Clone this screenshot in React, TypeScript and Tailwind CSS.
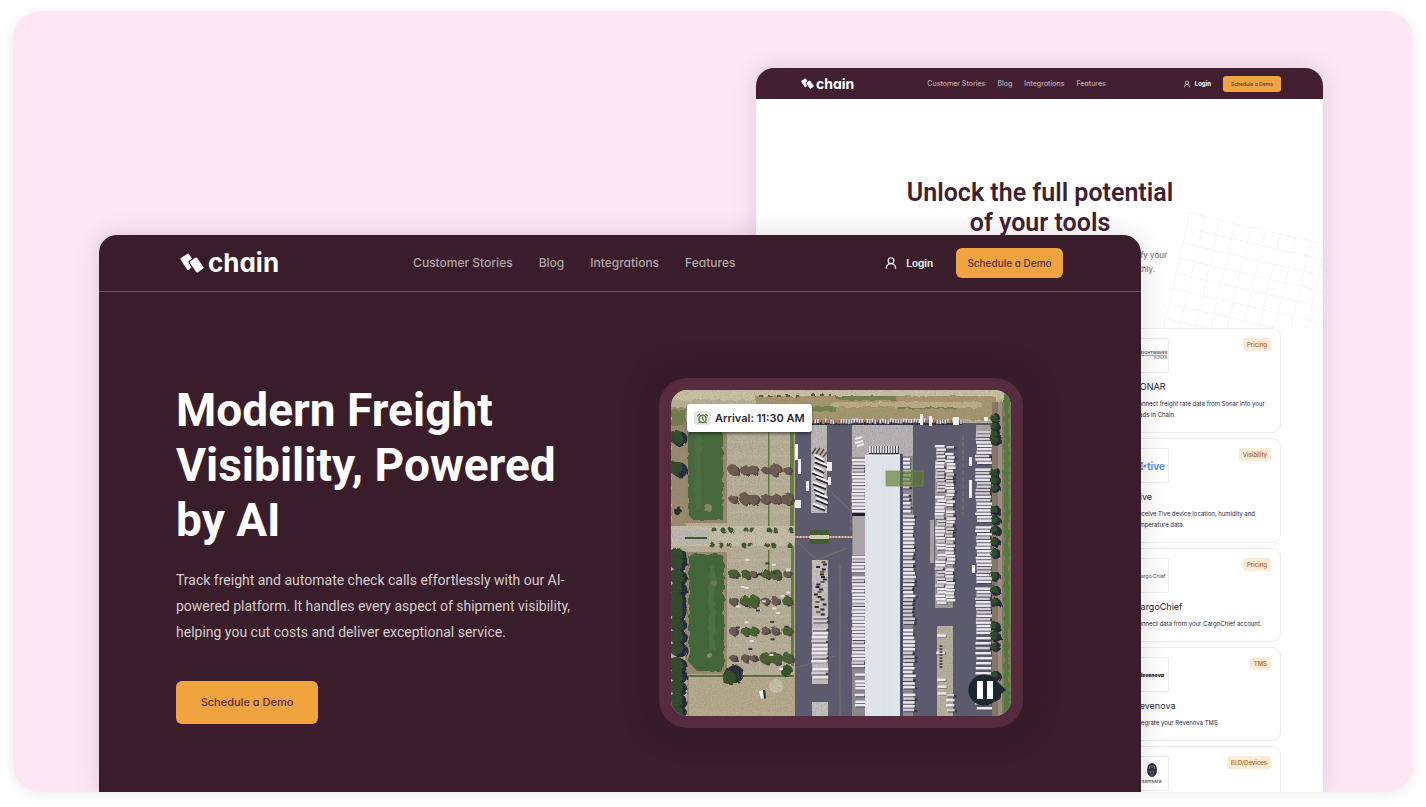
import React from 'react';
import { AlarmClock, UserRound } from 'lucide-react';

const NAV = ['Customer Stories', 'Blog', 'Integrations', 'Features'];

const INTEGRATIONS = [
  {
    name: 'SONAR',
    tag: 'Pricing',
    text: 'Connect freight rate data from Sonar into your loads in Chain.',
    logo: 'sonar',
  },
  {
    name: 'Tive',
    tag: 'Visibility',
    text: 'Receive Tive device location, humidity and temperature data.',
    logo: 'tive',
  },
  {
    name: 'CargoChief',
    tag: 'Pricing',
    text: 'Connect data from your CargoChief account.',
    logo: 'cargo',
  },
  {
    name: 'Revenova',
    tag: 'TMS',
    text: 'Integrate your Revenova TMS',
    logo: 'revenova',
  },
];

// repeatable noise, so the yard looks the same on every render
const noise = (n: number) => {
  const v = Math.sin(n * 127.1 + 11.7) * 43758.5453;
  return v - Math.floor(v);
};

// the text colour is the gap between the two links
const ChainMark = ({ className }: { className: string }) => (
  <svg viewBox="0 0 24 20" className={className} strokeLinejoin="round" aria-hidden="true">
    <path d="M2 6 8 2.2 13 10 8.200 15.500Z" fill="#fff" stroke="#fff" strokeWidth="3" />
    <path
      d="M11.400 9.300 16.200 6.100 22 14.600 17.200 18Z"
      fill="currentColor"
      stroke="currentColor"
      strokeWidth="5.500"
    />
    <path d="M11.400 9.300 16.200 6.100 22 14.600 17.200 18Z" fill="#fff" stroke="#fff" strokeWidth="3" />
  </svg>
);

type Trailers = {
  x: number;
  w: number;
  from: number;
  to: number;
  seed: number;
  jitter?: number;
  step?: number;
  fill?: number;
};

const TrailerColumn = ({
  x,
  w,
  from,
  to,
  seed,
  jitter = 2,
  step = 3.4,
  fill = 0.92,
}: Trailers) => {
  const count = Math.floor((to - from) / step);
  return (
    <g>
      {Array.from({ length: count }, (_, i) => {
        const r = noise(seed + i);
        if (r > fill) return null;
        const left = x + (noise(seed + i * 3) - 0.5) * jitter;
        const y = from + i * step;
        return (
          <g key={i}>
            <rect
              x={left + 1}
              y={y + 1}
              width={w}
              height={2.4}
              fill="#2f2d3d"
              opacity={r > 0.5 ? 0.85 : 0.35}
            />
            <rect
              x={left}
              y={y}
              width={w - r * 2}
              height={2.5}
              fill={r > 0.6 ? '#cfcbcf' : '#eae8ed'}
            />
          </g>
        );
      })}
    </g>
  );
};

const TREE_ROWS = [80, 109, 184, 211, 241, 268];
const TREE_COLS = [62, 74, 82, 94, 104, 116];

const YardPhoto = () => (
  <svg
    viewBox="0 0 340 326"
    preserveAspectRatio="xMidYMid slice"
    className="block h-auto w-full"
    role="img"
    aria-label="Aerial view of a freight yard"
  >
    <defs>
      <filter id="grain" x="0" y="0" width="100%" height="100%">
        <feTurbulence type="fractalNoise" baseFrequency="0.7" numOctaves="2" seed="4" />
        <feColorMatrix values="0 0 0 0 0.15  0 0 0 0 0.14  0 0 0 0 0.12  1.4 0 0 0 -0.55" />
      </filter>
      <filter id="rough" x="-10%" y="-10%" width="120%" height="120%">
        <feTurbulence type="fractalNoise" baseFrequency="0.15" numOctaves="2" seed="8" />
        <feDisplacementMap in="SourceGraphic" scale="5" />
      </filter>
    </defs>

    <rect width="340" height="326" fill="#b9b197" />

    {/* dirt strip and road along the top */}
    <g filter="url(#rough)">
      <rect x="-5" y="-5" width="350" height="15" fill="#c9c2a2" />
      <rect x="85" y="6" width="240" height="24" fill="#a6976f" />
      <path d="M165 6h60v4h-60zM225 16h60v3h-60zM100 17h65v4h-65z" fill="#75834f" />
      <path d="M160 12h150v5H160z" fill="#c0ad89" />
      <path d="M88 6h40M140 5h20" stroke="#5d5b4a" strokeWidth="2" strokeDasharray="4 5" />
      <rect x="0" y="18" width="15" height="125" fill="#9b8b6f" />
      <rect x="0" y="20" width="14" height="16" fill="#6f7f4a" />
    </g>

    {/* playing fields */}
    <rect x="14" y="32" width="42" height="101" fill="#9b8870" />
    <rect x="14" y="162" width="42" height="122" fill="#9b8870" />
    <g filter="url(#rough)">
      <path d="M17 34h35v96H22l-5-6Z" fill="#46693b" />
      <path d="m18 167 4-3h28l3 4v108l-5 5H26l-8-9Z" fill="#3f6637" />
      <path d="M24 40h6v80h-6zM38 175h6v85h-6z" fill="#4c7041" />
      <circle cx="37" cy="118" r="4" fill="#8b8a60" />
      <circle cx="38" cy="265" r="3" fill="#8b8a60" />
      <circle cx="43" cy="193" r="3" fill="#687b4a" />
    </g>

    {/* car park */}
    <rect x="56" y="34" width="67" height="252" fill="#b8b098" />
    {[52, 66, 94, 122, 170, 197, 226, 255].map((y) => (
      <path key={y} d={`M58 ${y}h62`} stroke="#c3bca6" strokeWidth="1" strokeDasharray="2 1" />
    ))}
    <rect x="97" y="34" width="1.5" height="104" fill="#5f7a42" />
    <rect x="97" y="160" width="1.5" height="24" fill="#5f7a42" />
    <rect x="119" y="34" width="4" height="104" fill="#648046" />
    <rect x="120" y="154" width="3" height="122" fill="#648046" />
    <rect x="0" y="136" width="124" height="20" fill="#c6bfa8" />
    <path d="M0 140h38v14H0z" fill="#bdb9b3" />
    <path d="M14 148h22" stroke="#41552f" strokeWidth="2" />
    <path d="M17 286h106" stroke="#587040" strokeWidth="2" />
    <rect x="17" y="288" width="107" height="38" fill="#b6ab8e" />
    <path d="M17 287v39" stroke="#8c8069" />
    <circle cx="105" cy="296" r="7" fill="#c9c0a8" />

    <g filter="url(#rough)">
      {TREE_ROWS.map((y, r) =>
        TREE_COLS.map((x, c) => {
          const n = noise(r * 9 + c);
          return (
            <g key={`${r}-${c}`}>
              <circle cx={x + 2} cy={y + 1} r={3 + n * 3} fill="#4b4243" />
              <circle
                cx={x}
                cy={y}
                r={3 + n * 3}
                fill={r > 1 && n > 0.4 ? '#49602f' : '#6d5a4f'}
              />
            </g>
          );
        })
      )}
      {[43, 52, 60, 75, 81, 98, 104, 120].map((x) => (
        <g key={x}>
          <circle cx={x} cy="140" r="2.5" fill="#475736" />
          <circle cx={x - 2} cy="155" r="2.5" fill="#475736" />
        </g>
      ))}
      {[47, 78, 165, 172, 186, 198, 210, 221, 234, 246, 258, 274, 284, 297, 310, 322].map((y) => (
        <g key={y}>
          <circle cx="9" cy={y + 2} r="7.5" fill="#23283a" />
          <circle cx="5" cy={y} r="7" fill="#2d4a2a" />
        </g>
      ))}
      <circle cx="7" cy="121" r="4" fill="#263323" />
      <circle cx="64" cy="284" r="9" fill="#262f35" />
      <circle cx="58" cy="288" r="7" fill="#324f28" />
      <circle cx="116" cy="281" r="6" fill="#324f28" />
    </g>
    {Array.from({ length: 26 }, (_, i) => (
      <rect
        key={i}
        x={60 + noise(i) * 56}
        y={165 + noise(i + 50) * 118}
        width="4"
        height="2"
        fill={i % 3 === 0 ? '#34363f' : '#eceaea'}
      />
    ))}
    <path d="m88 301 4-1 1 8-3 1Z" fill="#fff" />
    <path d="m92 300 2 0 1 8-2 1Z" fill="#23232f" />

    {/* asphalt */}
    <rect x="124" y="33" width="198" height="293" fill="#5c5a6e" />
    <rect x="140" y="35" width="16" height="88" fill="#bcb9b8" />
    <rect x="141" y="170" width="16" height="124" fill="#c4c0bd" />
    <rect x="141" y="312" width="16" height="14" fill="#c4c0bd" />
    <rect x="181" y="35" width="61" height="32" fill="#b7b3b4" />
    <rect x="231" y="66" width="11" height="260" fill="#8e8b94" />
    <rect x="181" y="67" width="13" height="259" fill="#8e8a90" />
    <rect x="264" y="70" width="18" height="148" fill="#a29e99" />
    <rect x="266" y="236" width="16" height="90" fill="#b7b19f" />
    <rect x="259" y="130" width="4" height="43" fill="#a8a4a8" />
    <rect x="305" y="35" width="15" height="12" fill="#a8a2a0" />
    <path d="M124 147h58" stroke="#d9cfc4" strokeWidth="2" />
    <path d="M124 147h58" stroke="#8a5f50" strokeWidth="1" strokeDasharray="2 1" />
    <path d="M139 140h19v5h-19zM139 149h19v5h-19z" fill="#3f5c2f" />
    <rect x="139" y="145" width="19" height="4" fill="#d6d0c0" />
    <path
      d="m143 86 38 36M124 150l22 20 30-12M124 278l40-12M169 175v151"
      fill="none"
      stroke="#8d8172"
      strokeWidth="0.6"
    />
    <path d="M180 66v74M292 45v80" stroke="#83755d" strokeWidth="1" strokeDasharray="5 2" />
    <rect width="340" height="326" filter="url(#grain)" opacity="0.4" />

    {/* tilted trailers in the first strip */}
    {Array.from({ length: 10 }, (_, i) => (
      <g key={i}>
        <path
          d={`m${141 + noise(i) * 4} ${67 + i * 5.400} ${9 + noise(i + 3) * 4} 5`}
          stroke="#2b2a38"
          strokeWidth="2"
        />
        <path
          d={`m${141 + noise(i) * 4} ${65 + i * 5.400} ${9 + noise(i + 3) * 4} 5`}
          stroke="#f3f1f4"
          strokeWidth="2"
        />
      </g>
    ))}
    <path d="m141 64 4-6M145 64l4-6M149 65l4-6M152 67l4-5" stroke="#5d4540" strokeWidth="1.500" />
    {Array.from({ length: 22 }, (_, i) => (
      <rect
        key={i}
        x={142 + noise(i + 7) * 10}
        y={171 + i * 2.500}
        width="4"
        height="2"
        fill={i % 4 === 0 ? '#7b5742' : '#292938'}
      />
    ))}
    <TrailerColumn x={141} w={16} from={226} to={293} seed={12} step={4} />
    <g fill="#f0eff2">
      <rect x="124" y="54" width="3" height="16" />
      <rect x="127" y="69" width="3" height="15" />
      <rect x="124" y="110" width="6" height="8" />
      <rect x="135" y="91" width="3" height="10" />
      <rect x="156" y="72" width="5" height="9" />
      <rect x="157" y="87" width="3" height="8" />
      <rect x="298" y="67" width="3" height="9" />
      <rect x="298" y="90" width="3" height="18" />
      <rect x="301" y="175" width="3" height="8" />
    </g>

    {/* cars parked under the dirt strip */}
    {Array.from({ length: 58 }, (_, i) => (
      <g key={i}>
        <rect x={141 + i * 2.6} y="30" width="2" height="5" fill="#2a2a38" />
        <rect
          x={141 + i * 2.6}
          y={28 + noise(i) * 2}
          width="1.5"
          height="4"
          fill={noise(i + 4) > 0.8 ? '#d98a54' : '#e6e4e8'}
        />
      </g>
    ))}
    <path d="M249 24h3v11h-3zM258 26h3v10h-3zM282 27h6v8h-6zM313 27h4v4h-4z" fill="#f0eff2" />

    {/* warehouse and its docks */}
    <TrailerColumn x={181} w={14} from={69} to={124} seed={31} jitter={1} />
    <TrailerColumn x={181} w={14} from={166} to={280} seed={52} jitter={1} />
    <TrailerColumn x={184} w={11} from={280} to={326} seed={77} jitter={1} fill={0.6} />
    <TrailerColumn x={230} w={10} from={68} to={124} seed={41} step={4} />
    <TrailerColumn x={231} w={13} from={125} to={326} seed={66} jitter={3} step={3.8} />
    {Array.from({ length: 11 }, (_, i) => (
      <g key={i}>
        <rect x={198 + i * 2.7} y="56" width="2.7" height="8" fill="#2d2c3b" />
        <rect x={198 + i * 2.7} y="56" width="1.8" height="7" fill="#e7e5ea" />
      </g>
    ))}
    <path d="m184 49 7-2M184 53l8-2M186 56l7-2" stroke="#f0eff2" strokeWidth="2" />
    <rect x="182" y="125" width="13" height="40" fill="#a9a5a8" />
    <rect x="181" y="123" width="14" height="3" fill="#22202c" />
    <rect x="229" y="64" width="3" height="262" fill="#4d4c66" />
    <rect x="194" y="65" width="35" height="261" fill="#dfe3ea" />
    <rect x="194" y="65" width="35" height="1" fill="#f5f6f8" />
    <path d="M212 75v251M219 75v251" stroke="#d3d8e1" strokeWidth="0.7" strokeDasharray="3 5" />

    {/* right-hand trailer park */}
    <TrailerColumn x={265} w={10} from={55} to={218} seed={81} jitter={3} />
    <TrailerColumn x={275} w={9} from={56} to={214} seed={94} />
    <TrailerColumn x={266} w={9} from={241} to={326} seed={29} fill={0.2} />
    <TrailerColumn x={275} w={9} from={304} to={326} seed={15} step={5} />
    <path d="M270 255v24" stroke="#52504f" strokeWidth="3" strokeDasharray="2 1" />
    <TrailerColumn x={305} w={16} from={41} to={247} seed={102} />
    <TrailerColumn x={305} w={16} from={247} to={326} seed={131} step={5} />

    {/* verge on the right edge */}
    <rect x="321" y="12" width="19" height="314" fill="#857767" />
    <rect x="327" y="12" width="4" height="314" fill="#9c8d7c" />
    <g filter="url(#rough)">
      <rect x="333" y="0" width="5" height="330" fill="#557a3d" />
      {[28, 36, 44, 50, 82, 90, 98, 120, 130, 140, 152, 163, 186, 200, 212, 236, 246, 256, 285, 305].map(
        (y) => (
          <g key={y}>
            <circle cx="325" cy={y + 1} r="5" fill="#252c36" />
            <circle cx="323" cy={y} r="3.5" fill="#2f4d2a" />
          </g>
        )
      )}
    </g>

    <rect
      x="215"
      y="81"
      width="37"
      height="15"
      fill="#5f7b32"
      fillOpacity="0.65"
      stroke="#6f9440"
      strokeWidth="0.7"
    />

    <circle cx="313" cy="300" r="15.5" fill="#1c2730" />
    <path d="m325 290 10 10-9 7Z" fill="#1c2730" />
    <path d="M306 291h6v18h-6zM316 291h6v18h-6z" fill="#fff" />
  </svg>
);

const PartnerLogo = ({ kind }: { kind: string }) => {
  if (kind === 'tive') {
    return (
      <span className="flex items-center gap-px text-[10px] leading-3 font-bold text-[#5c8fea]">
        <svg viewBox="0 0 10 10" className="size-2" fill="#5c8fea" aria-hidden="true">
          <path d="M3.5 0h3v3h-3zM0 3.5h3v3H0zM7 3.5h3v3H7zM3.5 7h3v3h-3zM4 4h2v2H4z" />
        </svg>
        tive
      </span>
    );
  }
  if (kind === 'cargo') {
    return <span className="text-[5px] leading-2 text-[#55525e]">Cargo·Chief</span>;
  }
  if (kind === 'revenova') {
    return <span className="text-[5px] leading-2 font-black text-[#1d1a26] italic">Revenova</span>;
  }
  if (kind === 'samsara') {
    return (
      <span className="flex flex-col items-center text-[5px] leading-2 text-[#33323e]">
        <svg viewBox="0 0 10 14" className="h-[14px] w-[10px]" aria-hidden="true">
          <ellipse cx="5" cy="7" rx="5" ry="7" fill="#2f3142" />
          <path
            d="M3 3 2 6M7 3l1 3M5 2v3M3 8l1 2M7 8 6 10M5 11v2"
            stroke="#9a9cab"
            strokeWidth="0.8"
          />
        </svg>
        samsara
      </span>
    );
  }
  return (
    <span className="flex flex-col items-end text-[4px] leading-1 font-bold text-[#5d5c63]">
      <span className="border-b border-[#aaa9ae]">FREIGHTWAVES</span>
      <span className="font-normal">SONAR</span>
    </span>
  );
};

const CardTop = ({ logo, tag }: { logo: string; tag: string }) => (
  <div className="flex items-start justify-between">
    <div className="flex size-[35px] items-center justify-center overflow-hidden rounded-[2px] border border-[#ececef]">
      <PartnerLogo kind={logo} />
    </div>
    <span className="rounded-[3px] bg-[#fdebd5] px-1 text-[6px] leading-[13px] font-medium text-[#a9622f]">
      {tag}
    </span>
  </div>
);

const IntegrationsPage = () => (
  <section className="mt-[57px] mr-[90px] w-[41%] max-w-[567px] justify-self-end rounded-t-[18px] bg-white shadow-[0_0_24px_rgba(60,30,50,0.14)] [grid-area:1/1]">
    <header className="flex h-[31px] items-center rounded-t-[18px] bg-[#421f30] pr-[42px] pl-[45px]">
      <a href="#home" className="flex items-center gap-[2px] text-[#421f30]">
        <ChainMark className="h-[11px] w-[13px]" />
        <span className="text-[14px] leading-4 font-bold text-white [font-feature-settings:'cv11']">chain</span>
      </a>
      <nav className="ml-[73px] flex gap-3 text-[7px] leading-3 font-medium text-[#b9a9b0] [font-feature-settings:'cv11']">
        {NAV.map((item) => (
          <a key={item} href="#nav" className="whitespace-nowrap">
            {item}
          </a>
        ))}
      </nav>
      <a href="#login" className="ml-auto flex items-center gap-1 text-[6px] leading-3 font-bold text-white">
        <UserRound className="size-2" strokeWidth={2} />
        Login
      </a>
      <button className="ml-3 h-4 w-[58px] rounded-[3px] bg-[#efa440] text-[5px] leading-3 font-medium whitespace-nowrap text-[#5b3036] [font-feature-settings:'cv11']">
        Schedule a Demo
      </button>
    </header>
    <div className="relative pt-[79px] pr-[42px]">
      <svg
        viewBox="0 0 160 116"
        className="absolute top-[113px] right-0 h-[116px] w-[160px]"
        aria-hidden="true"
      >
        <g stroke="#f5f5f6" strokeWidth="1" transform="translate(27 1) rotate(13)">
          {Array.from({ length: 13 }, (_, i) => (
            <path key={`v${i}`} d={`M${i * 15.5} 0v180`} />
          ))}
          {Array.from({ length: 10 }, (_, i) => (
            <path key={`h${i}`} d={`M0 ${i * 15.5}h200`} />
          ))}
        </g>
      </svg>
      <h2 className="relative pl-[43px] text-center font-['Roboto',sans-serif] text-[25px] leading-[30px] font-semibold text-[#421f30]">
        Unlock the full potential
        <br />
        of your tools
      </h2>
      <p className="relative mt-[10px] flex flex-col items-end pr-[114px] text-[8px] leading-[14px] text-[#625c66]">
        <span>simplify your</span>
        <span className="pr-3">monthly.</span>
      </p>
      <div className="relative mt-[52px] ml-auto flex w-[157px] flex-col gap-[5px]">
        {INTEGRATIONS.map((card) => (
          <article
            key={card.name}
            className="rounded-[9px] border border-[#ececef] bg-white px-[9px] pt-[9px] pb-3"
          >
            <CardTop logo={card.logo} tag={card.tag} />
            <h3 className="mt-[7px] text-[9px] leading-[13px] text-[#251b2d]">{card.name}</h3>
            <p className="mt-[5px] text-[6px] leading-[11px] text-[#2b2536]">{card.text}</p>
          </article>
        ))}
        <article className="h-24 rounded-[9px] border border-[#ececef] bg-white px-[9px] pt-[9px]">
          <CardTop logo="samsara" tag="ELD/Devices" />
        </article>
      </div>
    </div>
  </section>
);

const HomePage = () => (
  <section className="z-10 mt-[224px] mr-[272px] ml-[86px] rounded-t-[18px] bg-[#3a1d2a] shadow-[0_0_24px_rgba(60,30,50,0.16)] [grid-area:1/1]">
    <header className="flex h-[57px] items-center border-b border-[#6c535d] pr-[78px] pl-[81px]">
      <a href="#home" className="flex items-center gap-1 text-[#3a1d2a]">
        <ChainMark className="h-5 w-6" />
        <span className="text-[26px] leading-8 font-bold text-white [font-feature-settings:'cv11']">chain</span>
      </a>
      <nav className="ml-[134px] flex gap-[26px] text-[12px] leading-4 font-medium text-[#b0a4a9] [font-feature-settings:'cv11']">
        {NAV.map((item) => (
          <a key={item} href="#nav" className="whitespace-nowrap">
            {item}
          </a>
        ))}
      </nav>
      <a
        href="#login"
        className="ml-auto flex items-center gap-2 text-[10px] leading-4 font-semibold text-white"
      >
        <UserRound className="size-[14px]" strokeWidth={2} />
        Login
      </a>
      <button className="ml-[23px] h-[30px] w-[107px] rounded-[6px] bg-[#efa440] text-[10px] leading-4 font-medium whitespace-nowrap text-[#5b3036] [font-feature-settings:'cv11']">
        Schedule a Demo
      </button>
    </header>
    <main className="flex items-center justify-between pt-[86px] pr-[118px] pl-[77px]">
      <div>
        <h1 className="font-['Roboto',sans-serif] text-[46px] leading-[55px] font-bold text-white">
          Modern Freight
          <br />
          Visibility, Powered
          <br />
          by AI
        </h1>
        <p className="mt-[19px] font-['Roboto',sans-serif] text-[14px] leading-[26px] text-[#d5ccd0]">
          Track freight and automate check calls effortlessly with our AI-
          <br />
          powered platform. It handles every aspect of shipment visibility,
          <br />
          helping you cut costs and deliver exceptional service.
        </p>
        <button className="mt-9 h-[43px] w-[142px] rounded-[6px] bg-[#efa440] text-[11px] leading-4 font-medium text-[#5b3036] [font-feature-settings:'cv11']">
          Schedule a Demo
        </button>
      </div>
      <figure className="relative w-[364px] shrink-0 rounded-[28px] bg-[#562b3e] p-3 shadow-[0_0_0_16px_#361b28,0_0_16px_18px_#361b28]">
        <div className="overflow-hidden rounded-[16px]">
          <YardPhoto />
        </div>
        <figcaption className="absolute top-[26px] left-7 flex h-7 items-center gap-1 rounded-[3px] bg-white px-[7px] text-[11px] font-semibold whitespace-nowrap text-[#2b2833] shadow-[0_2px_3px_rgba(0,0,0,0.45)]">
          <span className="flex h-[14px] w-[17px] items-center justify-center rounded-[3px] bg-[#e3e3e8]">
            <AlarmClock className="size-[11px] text-[#5c7a2c]" strokeWidth={3} />
          </span>
          Arrival: 11:30 AM
        </figcaption>
      </figure>
    </main>
  </section>
);

const App = () => {
  return (
    <div className="flex h-screen bg-white px-[13px] pt-[11px] pb-[15px] font-['Inter',sans-serif]">
      <div className="grid flex-1 grid-cols-1 grid-rows-1 overflow-hidden rounded-[28px] bg-[#fde7f5] shadow-[0_2px_14px_rgba(0,0,0,0.09)]">
        <IntegrationsPage />
        <HomePage />
      </div>
    </div>
  );
};

export default App;
